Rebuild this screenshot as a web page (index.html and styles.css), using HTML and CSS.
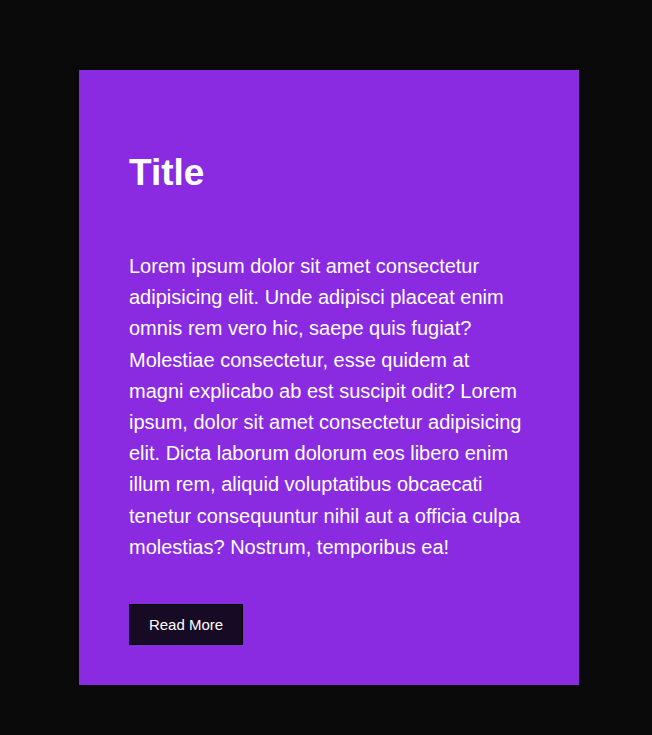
FILE: index.html
```html
<!DOCTYPE html>
<html lang="en">
<head>
<meta charset="utf-8">
<title>Card</title>
<link rel="stylesheet" href="styles.css">
</head>
<body>
<div class="card">
  <h1 class="card-title">Title</h1>
  <p class="card-text">Lorem ipsum dolor sit amet consectetur adipisicing elit. Unde adipisci placeat enim omnis rem vero hic, saepe quis fugiat? Molestiae consectetur, esse quidem at magni explicabo ab est suscipit odit? Lorem ipsum, dolor sit amet consectetur adipisicing elit. Dicta laborum dolorum eos libero enim illum rem, aliquid voluptatibus obcaecati tenetur consequuntur nihil aut a officia culpa molestias? Nostrum, temporibus ea!</p>
  <button class="card-btn">Read More</button>
</div>
</body>
</html>
```
FILE: styles.css
```css
html, body {
  margin: 0;
  background: #0a0a0a;
}
body {
  padding: 70px 0 50px 79px;
  font-family: "Liberation Sans", Arial, sans-serif;
}
.card {
  width: 500px;
  box-sizing: border-box;
  background: #8a2be2;
  padding: 82px 50px 40px 50px;
  color: #fff;
}
.card-title {
  margin: 0 0 57px 0;
  font-size: 37px;
  line-height: 42px;
  font-weight: bold;
}
.card-text {
  margin: 0 0 41px 0;
  font-size: 20px;
  line-height: 31.2px;
}
.card-btn {
  display: block;
  width: 114px;
  height: 41px;
  box-sizing: border-box;
  background: #160a24;
  color: #fff;
  border: 1px solid #000;
  font-family: "Liberation Sans", Arial, sans-serif;
  font-size: 15px;
  padding: 0;
}
```
